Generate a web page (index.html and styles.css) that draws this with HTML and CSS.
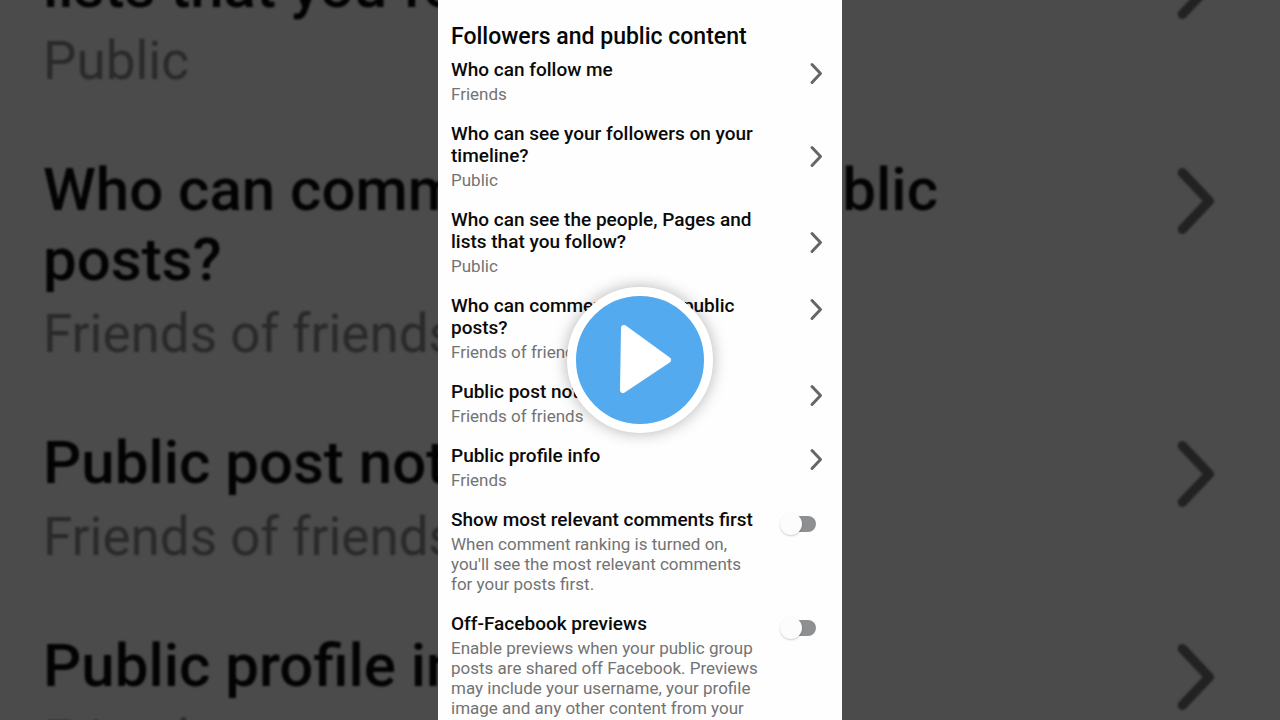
FILE: index.html
```html
<!DOCTYPE html>
<html lang="en">
<head>
    <meta charset="UTF-8">
    <title>Followers and public content</title>
    <meta name="viewport" content="width=device-width, initial-scale=1">
    <link rel="stylesheet" href="styles.css">
</head>
<body>
    <div class="player">
        <!-- enlarged, darkened copy of the list behind the panel -->
        <div class="backdrop" aria-hidden="true">
            <div class="row centered">
                <div class="text"><div class="title">Who can see the people, Pages and lists that you follow?</div><div class="sub">Public</div></div>
                <svg class="chevron" viewBox="0 0 14 30"><path d="M3 5.5 11.5 14.5 3 23.5"/></svg>
            </div>
            <div class="row">
                <div class="text"><div class="title">Who can comment on your public posts?</div><div class="sub">Friends of friends</div></div>
                <svg class="chevron" viewBox="0 0 14 30"><path d="M3 5.5 11.5 14.5 3 23.5"/></svg>
            </div>
            <div class="row">
                <div class="text"><div class="title">Public post notifications</div><div class="sub">Friends of friends</div></div>
                <svg class="chevron" viewBox="0 0 14 30"><path d="M3 5.5 11.5 14.5 3 23.5"/></svg>
            </div>
            <div class="row">
                <div class="text"><div class="title">Public profile info</div><div class="sub">Friends</div></div>
                <svg class="chevron" viewBox="0 0 14 30"><path d="M3 5.5 11.5 14.5 3 23.5"/></svg>
            </div>
        </div>

        <main class="panel">
            <h1>Followers and public content</h1>
            <div class="list">
                <a class="row" href="#follow">
                    <span class="text"><span class="title">Who can follow me</span><span class="sub">Friends</span></span>
                    <svg class="chevron" viewBox="0 0 14 30"><path d="M3 5.5 11.5 14.5 3 23.5"/></svg>
                </a>
                <a class="row centered" href="#followers">
                    <span class="text"><span class="title">Who can see your followers on your timeline?</span><span class="sub">Public</span></span>
                    <svg class="chevron" viewBox="0 0 14 30"><path d="M3 5.5 11.5 14.5 3 23.5"/></svg>
                </a>
                <a class="row centered" href="#following">
                    <span class="text"><span class="title">Who can see the people, Pages and lists that you follow?</span><span class="sub">Public</span></span>
                    <svg class="chevron" viewBox="0 0 14 30"><path d="M3 5.5 11.5 14.5 3 23.5"/></svg>
                </a>
                <a class="row" href="#comments">
                    <span class="text"><span class="title">Who can comment on your public posts?</span><span class="sub">Friends of friends</span></span>
                    <svg class="chevron" viewBox="0 0 14 30"><path d="M3 5.5 11.5 14.5 3 23.5"/></svg>
                </a>
                <a class="row" href="#notifications">
                    <span class="text"><span class="title">Public post notifications</span><span class="sub">Friends of friends</span></span>
                    <svg class="chevron" viewBox="0 0 14 30"><path d="M3 5.5 11.5 14.5 3 23.5"/></svg>
                </a>
                <a class="row" href="#profile">
                    <span class="text"><span class="title">Public profile info</span><span class="sub">Friends</span></span>
                    <svg class="chevron" viewBox="0 0 14 30"><path d="M3 5.5 11.5 14.5 3 23.5"/></svg>
                </a>
                <div class="row">
                    <label class="text" for="relevant"><span class="title">Show most relevant comments first</span><span class="sub">When comment ranking is turned on, you'll see the most relevant comments for your posts first.</span></label>
                    <input class="switch" type="checkbox" id="relevant">
                </div>
                <div class="row">
                    <label class="text" for="previews"><span class="title">Off-Facebook previews</span><span class="sub">Enable previews when your public group posts are shared off Facebook. Previews may include your username, your profile image and any other content from your</span></label>
                    <input class="switch" type="checkbox" id="previews">
                </div>
            </div>
        </main>

        <button class="play" type="button" aria-label="Play">
            <svg viewBox="0 0 128 128"><path d="M48 32 92 64 47 94Z"/></svg>
        </button>
    </div>
</body>
</html>
```

FILE: styles.css
```css
* {
    box-sizing: border-box;
}
body {
    margin: 0;
    font-family: Roboto, Arial, sans-serif;
    background: #4b4b4b;
}
.player {
    position: relative;
    height: 100vh;
    display: flex;
    justify-content: center;
    overflow: hidden;
}
.row {
    display: flex;
    align-items: flex-start;
    justify-content: space-between;
    color: inherit;
    text-decoration: none;
}
.row.centered {
    align-items: center;
}
.title,
.sub {
    display: block;
}
.title {
    font-weight: 500;
}
.chevron {
    flex: none;
    fill: none;
    stroke: #666;
    stroke-width: 3;
    stroke-linecap: round;
    stroke-linejoin: round;
}

/* backdrop */
.backdrop {
    position: absolute;
    inset: 0;
    display: flex;
    flex-direction: column;
    gap: 62px;
    margin-top: -118px;
    padding: 0 63px 0 43px;
    filter: blur(1px);
}
.backdrop .text {
    width: 84%;
}
.backdrop .title {
    margin-bottom: 8px;
    font-size: 60px;
    line-height: 70px;
    color: #030303;
}
.backdrop .sub {
    font-size: 53px;
    line-height: 63px;
    color: #2a2a2a;
}
.backdrop .chevron {
    width: 44px;
    height: 95px;
    stroke: #222;
}

/* panel */
.panel {
    position: relative;
    height: 100%;
    aspect-ratio: 101 / 180;
    padding: 24px 19px 0 13px;
    background: #fefefe;
    overflow: hidden;
}
h1 {
    margin: 0 0 9px;
    font-size: 23px;
    line-height: 26px;
    font-weight: 500;
    color: #050505;
}
.list {
    display: flex;
    flex-direction: column;
    gap: 19px;
}
.panel .text {
    width: 84%;
}
.panel .title {
    margin-bottom: 3px;
    font-size: 19px;
    line-height: 22px;
    color: #0a0a0a;
}
.panel .sub {
    font-size: 17px;
    line-height: 20px;
    color: #737373;
}
.panel .chevron {
    width: 14px;
    height: 30px;
}

/* switch */
.switch {
    appearance: none;
    position: relative;
    flex: none;
    width: 34px;
    height: 16px;
    margin: 7px 7px 0 0;
    border-radius: 8px;
    background: #8d8f91;
}
.switch::before {
    content: "";
    position: absolute;
    left: -2px;
    top: -3px;
    width: 22px;
    height: 22px;
    border-radius: 50%;
    background: #fcfcfc;
    box-shadow: 0 1px 2px rgba(0, 0, 0, 0.2);
}
.switch:checked::before {
    left: 14px;
}

/* play button */
.play {
    position: absolute;
    top: 50%;
    left: 50%;
    transform: translate(-50%, -50%);
    width: 146px;
    height: 146px;
    padding: 0;
    border: 9px solid #fff;
    border-radius: 50%;
    background: #54aaee;
    box-shadow: 0 0 16px rgba(0, 0, 0, 0.3);
    cursor: pointer;
}
.play svg {
    display: block;
    width: 100%;
    fill: #fff;
    stroke: #fff;
    stroke-width: 6;
    stroke-linejoin: round;
}
```
